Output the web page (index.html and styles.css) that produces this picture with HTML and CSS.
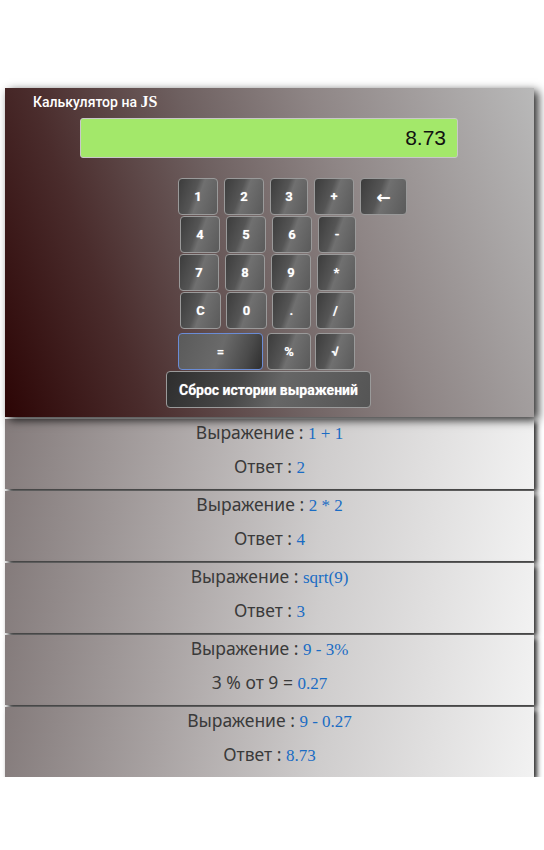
FILE: index.html
```html
<!DOCTYPE html>
<html lang="ru">
<head>
<meta charset="utf-8">
<title>Калькулятор на JS</title>
<link rel="stylesheet" href="styles.css">
</head>
<body>
<div class="app">
  <section class="calc">
    <h1 class="title">Калькулятор на <span class="js">JS</span></h1>
    <div class="display">8.73</div>
    <div class="keys">
      <div class="row r1">
        <button class="key">1</button><button class="key">2</button><button class="key k38">3</button><button class="key">+</button><button class="key wide">&#8592;</button>
      </div>
      <div class="row r2">
        <button class="key">4</button><button class="key">5</button><button class="key">6</button><button class="key k38">-</button>
      </div>
      <div class="row r3">
        <button class="key">7</button><button class="key">8</button><button class="key">9</button><button class="key k39">*</button>
      </div>
      <div class="row r4">
        <button class="key k41">C</button><button class="key k41">0</button><button class="key k39">.</button><button class="key k39">/</button>
      </div>
      <div class="row r5">
        <button class="key eq">=</button><button class="key k44">%</button><button class="key">&#8730;</button>
      </div>
      <div class="row r6">
        <button class="key reset">Сброс истории выражений</button>
      </div>
    </div>
  </section>
  <ul class="history">
    <li class="item"><p>Выражение : <span class="val">1 + 1</span></p><p>Ответ : <span class="val">2</span></p></li>
    <li class="item"><p>Выражение : <span class="val">2 * 2</span></p><p>Ответ : <span class="val">4</span></p></li>
    <li class="item"><p>Выражение : <span class="val">sqrt(9)</span></p><p>Ответ : <span class="val">3</span></p></li>
    <li class="item"><p>Выражение : <span class="val">9 - 3%</span></p><p>3 % от 9 = <span class="val">0.27</span></p></li>
    <li class="item"><p>Выражение : <span class="val">9 - 0.27</span></p><p>Ответ : <span class="val">8.73</span></p></li>
  </ul>
</div>
</body>
</html>
```

FILE: styles.css
```css
* { box-sizing: border-box; }
body {
  margin: 0;
  background: #fff;
  font-family: Roboto, "Liberation Sans", Arial, sans-serif;
}
.app {
  width: 529px;
  margin: 88px 0 0 5px;
}
.calc {
  height: 329px;
  padding-top: 5px;
  background: linear-gradient(70deg, #2c0505 0%, #4a2c2c 22%, #6e6060 45%, #8e8585 65%, #b9b9b9 100%);
  box-shadow: 4px 3px 9px rgba(0,0,0,0.85);
  position: relative;
  z-index: 2;
}
.title {
  margin: 0 0 0 28px;
  font-size: 14px;
  font-weight: 500;
  line-height: 17px;
  color: #fff;
}
.js {
  font-family: "Liberation Serif", "Times New Roman", serif;
  font-size: 16px;
  font-weight: 700;
}
.display {
  margin: 7px 0 0 75px;
  width: 378px;
  height: 40px;
  background: #a3e86a;
  border: 1px solid #c8c8c8;
  border-radius: 3px;
  font-family: "Liberation Sans", Arial, sans-serif;
  font-size: 21px;
  line-height: 38px;
  text-align: right;
  padding-right: 11px;
  color: #111;
}
.keys {
  margin-top: 20px;
  display: flex;
  flex-direction: column;
  gap: 1px;
}
.row {
  display: flex;
  gap: 6px;
}
.r1 { padding-left: 173px; }
.r2 { padding-left: 175px; }
.r3 { padding-left: 174px; }
.r4 { padding-left: 175px; gap: 5px; }
.r5 { padding-left: 173px; margin-top: 3px; gap: 4px; }
.r6 { padding-left: 161px; margin-top: 0; }
.key {
  width: 40px;
  height: 37px;
  padding: 0;
  border: 1px solid #9a9a9a;
  border-radius: 4px;
  background: linear-gradient(110deg, #3c3c3c 0%, #555 40%, #707070 52%, #5a5a5a 100%);
  color: #fff;
  font-family: Roboto, "Liberation Sans", sans-serif;
  font-size: 13px;
  font-weight: 700;
  text-shadow: 0 0 1px rgba(255,255,255,0.5);
}
.k38 { width: 38px; }
.k39 { width: 39px; }
.k41 { width: 41px; }
.k44 { width: 44px; }
.wide {
  width: 47px;
  font-family: "DejaVu Sans", sans-serif;
  font-size: 17px;
}
.eq {
  width: 85px;
  border-color: #6a8cd6;
  background: linear-gradient(110deg, #5a5a5a 0%, #6a6a6a 50%, #4a4a4a 80%, #2e2e2e 100%);
}
.reset {
  width: 205px;
  font-size: 14px;
  background: linear-gradient(110deg, #2e2e2e 0%, #484848 35%, #666 55%, #555 100%);
}
.history {
  list-style: none;
  margin: 0;
  padding: 0;
}
.item {
  height: 70px;
  margin-top: 2px;
  background: linear-gradient(100deg, #847b7b 0%, #a9a3a3 30%, #cfcdcd 60%, #f2f2f2 100%);
  box-shadow: 3px 3px 5px rgba(0,0,0,0.85);
  text-align: center;
  color: #3a3a3a;
  font-family: "Noto Sans", "Open Sans", sans-serif;
  font-size: 17.5px;
  position: relative;
  padding-top: 0;
}
.item p {
  margin: 0;
  height: 34px;
  line-height: 26px;
}
.val {
  font-family: "Liberation Serif", "Times New Roman", serif;
  color: #1a6cc4;
  font-size: 17px;
}
```
